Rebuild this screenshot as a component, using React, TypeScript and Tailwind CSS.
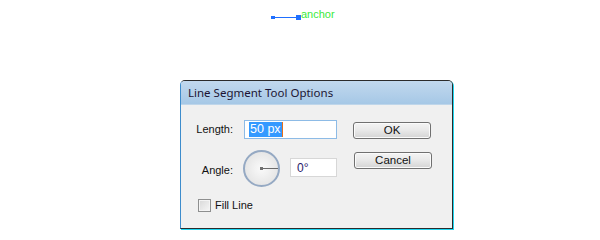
import React from 'react';

function Anchor() {
  return (
    <div className="flex items-start pl-[271px] pt-[9px] h-[24px]">
      <svg width="31" height="10" viewBox="0 0 31 10" className="mt-[6px]">
        <rect x="0" y="1" width="4" height="3" fill="#1f6fff" />
        <line x1="4" y1="2.5" x2="26" y2="2.5" stroke="#1f6fff" strokeWidth="1" />
        <rect x="25" y="0" width="5" height="5" fill="#1f6fff" />
      </svg>
      <span className="text-[11px] leading-none text-[#3bea3b] -ml-[1px]">anchor</span>
    </div>
  );
}

function Dial() {
  return (
    <div className="relative w-[37px] h-[37px] rounded-full border-2 border-[#95a9c3] bg-radial from-[#fafafa] to-[#dedede]">
      <div className="absolute left-[16px] top-[15.5px] w-[17px] h-px bg-[#6a6a6a]" />
      <div className="absolute left-[15px] top-[14.5px] w-[3px] h-[3px] bg-[#707070]" />
    </div>
  );
}

function Button({ label }: { label: string }) {
  return (
    <div className="w-[78px] h-[17px] rounded-[3px] border border-[#707070] bg-linear-to-b from-[#f4f4f4] via-[#e8e8e8] to-[#d4d4d4] flex items-center justify-center text-[11.5px] text-[#111] shadow-[inset_0_0_0_1px_#fbfbfb]">
      {label}
    </div>
  );
}

export default function App() {
  return (
    <div className="w-[600px] h-[240px] bg-white font-['Liberation_Sans',Arial,sans-serif]">
      <Anchor />
      <div className="ml-[180px] mt-[56px] w-[273px] h-[149px] flex flex-col rounded-t-[5px] border border-[#2b2b2b] border-l-[#3d8ccc] bg-[#f0f0f0] shadow-[1px_1px_0_#1fd6f0] overflow-hidden">
        <div className="h-[24px] shrink-0 flex items-center pl-[7px] bg-linear-to-b from-[#c1d8ee] to-[#a6c8e6] border-b border-[#bfd6ea] font-['Noto_Sans',sans-serif] text-[11.5px] text-[#1c1433]">
          Line Segment Tool Options
        </div>
        <div className="flex flex-col pt-[15px] text-[11px] text-[#111]">
          <div className="flex items-center h-[19px]">
            <div className="w-[52px] text-right">Length:</div>
            <div className="ml-[11px] w-[93px] h-[19px] border border-[#8dbbe6] bg-white flex items-center pl-[4px]">
              <span className="bg-[#3399ff] text-white text-[12.5px] leading-[15px] px-px">50 px</span>
              <span className="w-px h-[15px] bg-[#e8701a]" />
            </div>
            <div className="ml-[16px] mt-[2px]">
              <Button label="OK" />
            </div>
          </div>
          <div className="flex items-start mt-[11px] h-[37px]">
            <div className="w-[52px] text-right mt-[12px]">Angle:</div>
            <div className="ml-[10px]">
              <Dial />
            </div>
            <div className="ml-[10px] mt-[8px] w-[47px] h-[19px] border border-[#d7d7d7] bg-white flex items-center pl-[6px] text-[12px] text-[#2a1a6a]">
              0°
            </div>
            <div className="ml-[17px] mt-[2px]">
              <Button label="Cancel" />
            </div>
          </div>
          <div className="flex items-center mt-[10px] ml-[17px]">
            <div className="w-[13px] h-[13px] border border-[#8e8f8f] bg-linear-to-br from-[#d8d8d8] to-[#f7f7f7] shadow-[inset_0_0_0_1px_#f4f4f4]" />
            <span className="ml-[4px]">Fill Line</span>
          </div>
        </div>
      </div>
    </div>
  );
}
